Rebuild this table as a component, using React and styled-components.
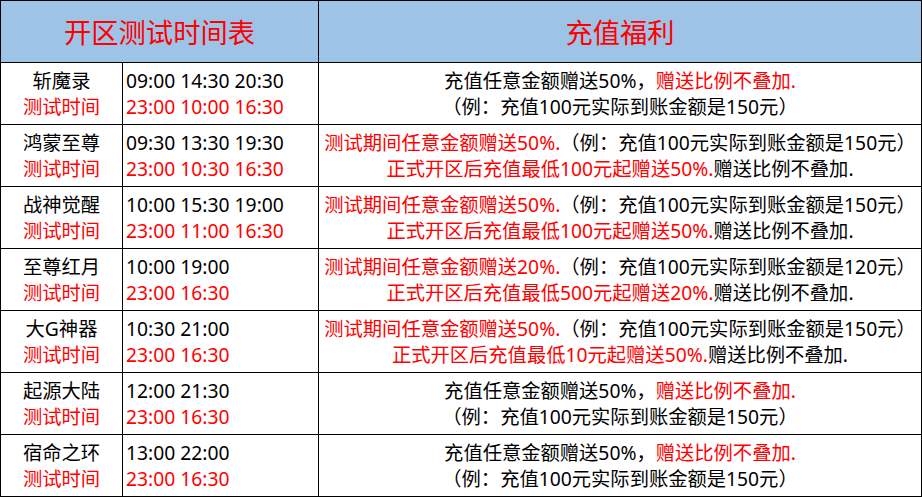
import React from 'react'
import styled, { createGlobalStyle } from 'styled-components'

const GlobalStyle = createGlobalStyle`
  html, body {
    margin: 0;
    padding: 0;
    background: #fff;
  }
  body {
    font-family: 'Noto Sans', 'Noto Sans CJK SC', sans-serif;
  }
`

const Grid = styled.div`
  display: grid;
  grid-template-columns: 121px 195px 602px;
  grid-auto-rows: 61px;
  gap: 1px;
  padding: 1px;
  width: 922px;
  box-sizing: border-box;
  background: #000;
`

const HeadCell = styled.div`
  grid-column: span ${props => props.span || 1};
  background: #9dc3e6;
  color: #ff0000;
  font-size: 27.3px;
  display: flex;
  align-items: center;
  justify-content: center;
  padding-bottom: 1px;
`

const Cell = styled.div`
  background: #fff;
  font-size: 19.3px;
  line-height: 26px;
  color: #000;
  display: flex;
  flex-direction: column;
  justify-content: center;
  align-items: ${props => props.align || 'center'};
  padding-left: ${props => props.pad || 0}px;
  white-space: nowrap;
  overflow: hidden;
`

const Line = styled.div`
  height: 26px;
`

const Red = styled.span`
  color: #ff0000;
`

const rows = [
  {
    name: '斩魔录',
    times: '09:00 14:30 20:30',
    test: '23:00 10:00 16:30',
    bonus: [
      <>充值任意金额赠送50%，<Red>赠送比例不叠加.</Red></>,
      <>（例：充值100元实际到账金额是150元）</>
    ]
  },
  {
    name: '鸿蒙至尊',
    times: '09:30 13:30 19:30',
    test: '23:00 10:30 16:30',
    bonus: [
      <><Red>测试期间任意金额赠送50%.</Red>（例：充值100元实际到账金额是150元）</>,
      <><Red>正式开区后充值最低100元起赠送50%.</Red>赠送比例不叠加.</>
    ]
  },
  {
    name: '战神觉醒',
    times: '10:00 15:30 19:00',
    test: '23:00 11:00 16:30',
    bonus: [
      <><Red>测试期间任意金额赠送50%.</Red>（例：充值100元实际到账金额是150元）</>,
      <><Red>正式开区后充值最低100元起赠送50%.</Red>赠送比例不叠加.</>
    ]
  },
  {
    name: '至尊红月',
    times: '10:00 19:00',
    test: '23:00 16:30',
    bonus: [
      <><Red>测试期间任意金额赠送20%.</Red>（例：充值100元实际到账金额是120元）</>,
      <><Red>正式开区后充值最低500元起赠送20%.</Red>赠送比例不叠加.</>
    ]
  },
  {
    name: '大G神器',
    times: '10:30 21:00',
    test: '23:00 16:30',
    bonus: [
      <><Red>测试期间任意金额赠送50%.</Red>（例：充值100元实际到账金额是150元）</>,
      <><Red>正式开区后充值最低10元起赠送50%.</Red>赠送比例不叠加.</>
    ]
  },
  {
    name: '起源大陆',
    times: '12:00 21:30',
    test: '23:00 16:30',
    bonus: [
      <>充值任意金额赠送50%，<Red>赠送比例不叠加.</Red></>,
      <>（例：充值100元实际到账金额是150元）</>
    ]
  },
  {
    name: '宿命之环',
    times: '13:00 22:00',
    test: '23:00 16:30',
    bonus: [
      <>充值任意金额赠送50%，<Red>赠送比例不叠加.</Red></>,
      <>（例：充值100元实际到账金额是150元）</>
    ]
  }
]

export default function App () {
  return (
    <>
      <GlobalStyle />
      <Grid>
        <HeadCell span={2}>开区测试时间表</HeadCell>
        <HeadCell>充值福利</HeadCell>
        {rows.map(row => (
          <React.Fragment key={row.name}>
            <Cell>
              <Line>{row.name}</Line>
              <Line><Red>测试时间</Red></Line>
            </Cell>
            <Cell align='flex-start' pad={3}>
              <Line>{row.times}</Line>
              <Line><Red>{row.test}</Red></Line>
            </Cell>
            <Cell>
              <Line>{row.bonus[0]}</Line>
              <Line>{row.bonus[1]}</Line>
            </Cell>
          </React.Fragment>
        ))}
      </Grid>
    </>
  )
}
